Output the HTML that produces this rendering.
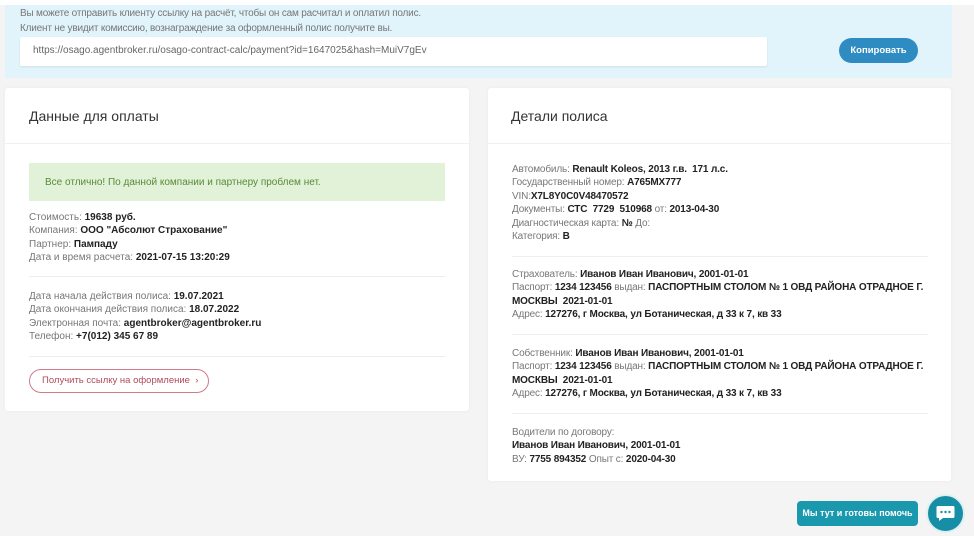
<!DOCTYPE html>
<html><head><meta charset="utf-8"><style>
*{margin:0;padding:0;box-sizing:border-box}
body{width:974px;height:536px;background:#f4f4f4;font-family:"Liberation Sans",sans-serif;position:relative;overflow:hidden;color:#333}
.abs{position:absolute}
.top{left:0;top:0;width:974px;height:5px;background:#fff}
.blue{left:5px;top:5px;width:947px;height:73px;background:#e1f3fb}
.t{font-size:10px;color:#777;white-space:nowrap;position:absolute}
.input{left:20px;top:37px;width:747px;height:29px;background:#fff;border-radius:2px;box-shadow:0 1px 2px rgba(0,0,0,.08)}
.copy{left:839px;top:38px;width:79px;height:25px;background:#2e8cc2;border-radius:13px;color:#fff;font-size:9.5px;font-weight:bold;text-align:center;line-height:25px}
.card{background:#fff;border-radius:3px;box-shadow:0 0 3px rgba(0,0,0,.05)}
.h{font-size:14px;color:#333;position:absolute}
.l{position:absolute;font-size:10px;line-height:13.4px;color:#777;white-space:nowrap}
.l b{color:#222}
.r{letter-spacing:-0.15px}
.hr{position:absolute;height:1px;background:#eee}
</style></head><body>
<div class="abs top"></div>
<div class="abs blue"></div>
<div class="t" style="left:20px;top:8px;letter-spacing:-0.2px">Вы можете отправить клиенту ссылку на расчёт, чтобы он сам расчитал и оплатил полис.</div>
<div class="t" style="left:20px;top:23px;letter-spacing:-0.2px">Клиент не увидит комиссию, вознаграждение за оформленный полис получите вы.</div>
<div class="abs input"></div>
<div class="t" style="left:33px;top:45px;color:#666">https://osago.agentbroker.ru/osago-contract-calc/payment?id=1647025&amp;hash=MuiV7gEv</div>
<div class="abs copy">Копировать</div>

<div class="abs card" style="left:5px;top:88px;width:464px;height:323px"></div>
<div class="h" style="left:29px;top:108px">Данные для оплаты</div>
<div class="hr" style="left:5px;top:143px;width:464px;background:#f0f0f0"></div>
<div class="abs" style="left:29px;top:163px;width:416px;height:38px;background:#e1f2d8"></div>
<div class="t" style="left:45px;top:177px;color:#5a8a3a">Все отлично! По данной компании и партнеру проблем нет.</div>
<div class="l" style="left:29px;top:211px">Стоимость: <b>19638 руб.</b><br>Компания: <b>ООО "Абсолют Страхование"</b><br>Партнер: <b>Пампаду</b><br>Дата и время расчета: <b>2021-07-15 13:20:29</b></div>
<div class="hr" style="left:29px;top:276px;width:416px"></div>
<div class="l" style="left:29px;top:290px">Дата начала действия полиса: <b>19.07.2021</b><br>Дата окончания действия полиса: <b>18.07.2022</b><br>Электронная почта: <b>agentbroker@agentbroker.ru</b><br>Телефон: <b>+7(012) 345 67 89</b></div>
<div class="hr" style="left:29px;top:356px;width:416px"></div>
<div class="abs" style="left:29px;top:369px;width:180px;height:24px;border:1px solid #d07a8a;border-radius:12px;font-size:9.5px;color:#b04a5a;line-height:22px;padding-left:12px">Получить ссылку на оформление &nbsp;›</div>

<div class="abs card" style="left:488px;top:88px;width:463px;height:393px"></div>
<div class="h" style="left:511px;top:108px">Детали полиса</div>
<div class="hr" style="left:488px;top:143px;width:463px;background:#f0f0f0"></div>
<div class="l r" style="left:512px;top:163px">Автомобиль: <b>Renault Koleos, 2013 г.в. &nbsp;171 л.с.</b><br>Государственный номер: <b>А765МХ777</b><br>VIN:<b>X7L8Y0C0V48470572</b><br>Документы: <b>СТС &nbsp;7729 &nbsp;510968</b> от: <b>2013-04-30</b><br>Диагностическая карта: <b>№</b> До:<br>Категория: <b>B</b></div>
<div class="hr" style="left:512px;top:256px;width:416px"></div>
<div class="l r" style="left:512px;top:268px">Страхователь: <b>Иванов Иван Иванович, 2001-01-01</b><br>Паспорт: <b>1234 123456</b> выдан: <b>ПАСПОРТНЫМ СТОЛОМ № 1 ОВД РАЙОНА ОТРАДНОЕ Г.</b><br><b>МОСКВЫ &nbsp;2021-01-01</b><br>Адрес: <b>127276, г Москва, ул Ботаническая, д 33 к 7, кв 33</b></div>
<div class="hr" style="left:512px;top:334px;width:416px"></div>
<div class="l r" style="left:512px;top:347px">Собственник: <b>Иванов Иван Иванович, 2001-01-01</b><br>Паспорт: <b>1234 123456</b> выдан: <b>ПАСПОРТНЫМ СТОЛОМ № 1 ОВД РАЙОНА ОТРАДНОЕ Г.</b><br><b>МОСКВЫ &nbsp;2021-01-01</b><br>Адрес: <b>127276, г Москва, ул Ботаническая, д 33 к 7, кв 33</b></div>
<div class="hr" style="left:512px;top:413px;width:416px"></div>
<div class="l r" style="left:512px;top:426px">Водители по договору:<br><b>Иванов Иван Иванович, 2001-01-01</b><br>ВУ: <b>7755 894352</b> Опыт с: <b>2020-04-30</b></div>

<div class="abs" style="left:797px;top:501px;width:121px;height:25px;background:#1a98ae;border-radius:4px;color:#fff;font-size:9px;font-weight:bold;text-align:center;line-height:25px">Мы тут и готовы помочь</div>
<div class="abs" style="left:926px;top:494px;width:39px;height:39px;border-radius:50%;background:#168fa6;border:2px solid #dfeff2"></div>
<svg class="abs" style="left:935px;top:503px" width="21" height="20" viewBox="0 0 21 20"><path d="M3 3h15a1.5 1.5 0 0 1 1.5 1.5v9a1.5 1.5 0 0 1-1.5 1.5H8l-4 3v-3H3a1.5 1.5 0 0 1-1.5-1.5v-9A1.5 1.5 0 0 1 3 3z" fill="#fff"/><circle cx="6.5" cy="9" r="1.2" fill="#168fa6"/><circle cx="10.5" cy="9" r="1.2" fill="#168fa6"/><circle cx="14.5" cy="9" r="1.2" fill="#168fa6"/></svg>
</body></html>
